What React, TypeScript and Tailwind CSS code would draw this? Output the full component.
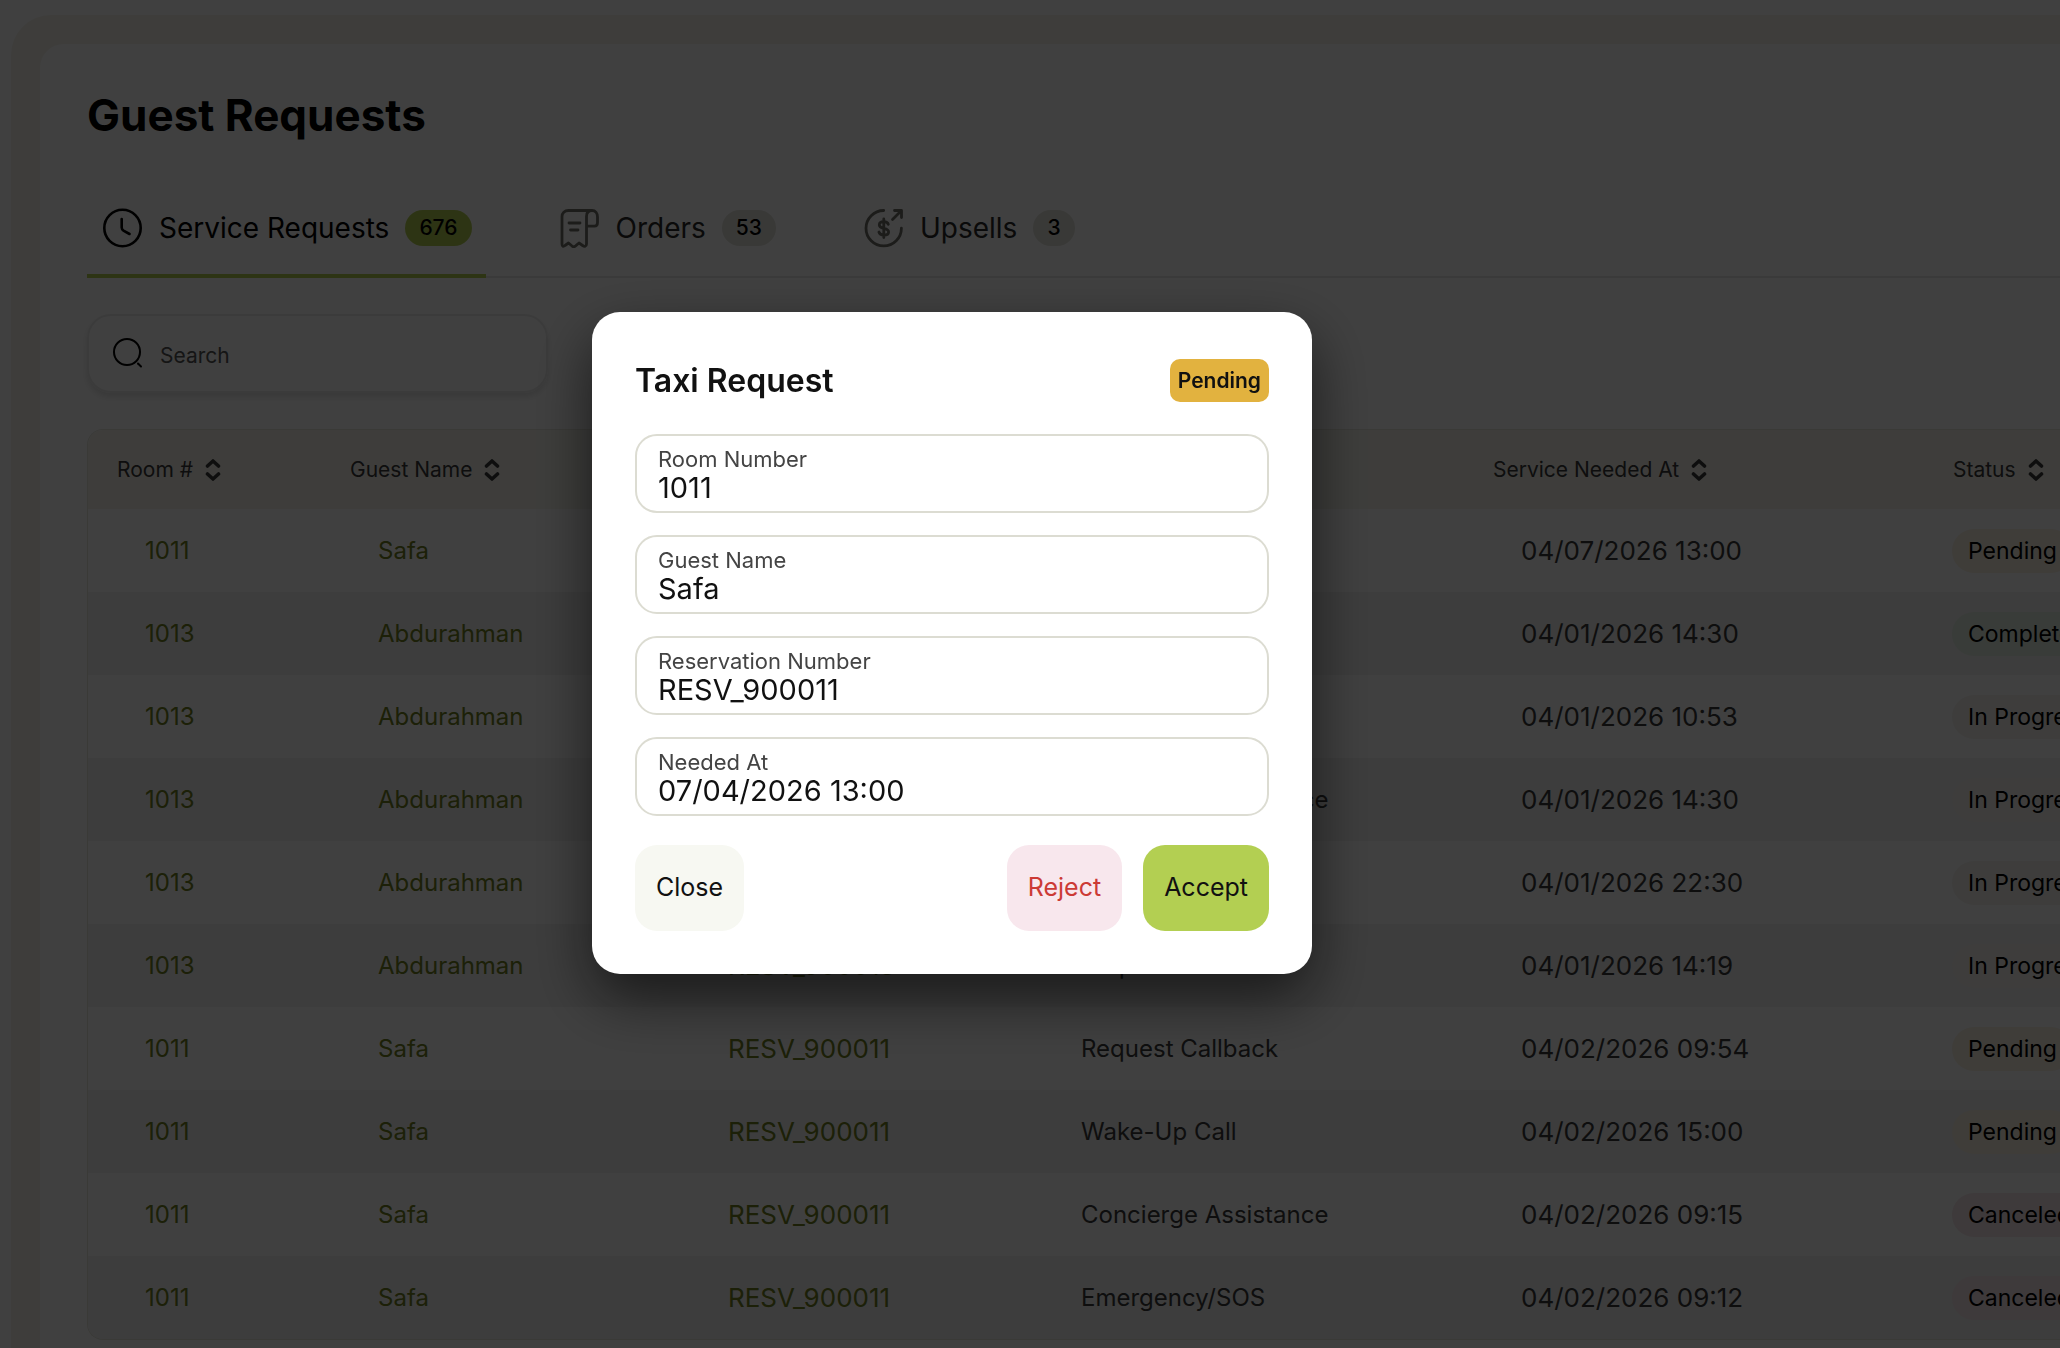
import type { ReactNode } from "react";

type Status = "Pending" | "Completed" | "In Progress" | "Canceled";

interface ServiceRequest {
  room: string;
  guest: string;
  reservation: string;
  service: string;
  neededAt: string;
  status: Status;
}

const requests: ServiceRequest[] = [
  { room: "1011", guest: "Safa", reservation: "RESV_900011", service: "Taxi Request", neededAt: "04/07/2026 13:00", status: "Pending" },
  { room: "1013", guest: "Abdurahman", reservation: "RESV_900013", service: "Wake-Up Call", neededAt: "04/01/2026 14:30", status: "Completed" },
  { room: "1013", guest: "Abdurahman", reservation: "RESV_900013", service: "Taxi Request", neededAt: "04/01/2026 10:53", status: "In Progress" },
  { room: "1013", guest: "Abdurahman", reservation: "RESV_900013", service: "Concierge Assistance", neededAt: "04/01/2026 14:30", status: "In Progress" },
  { room: "1013", guest: "Abdurahman", reservation: "RESV_900013", service: "Wake-Up Call", neededAt: "04/01/2026 22:30", status: "In Progress" },
  { room: "1013", guest: "Abdurahman", reservation: "RESV_900013", service: "Request Callback", neededAt: "04/01/2026 14:19", status: "In Progress" },
  { room: "1011", guest: "Safa", reservation: "RESV_900011", service: "Request Callback", neededAt: "04/02/2026 09:54", status: "Pending" },
  { room: "1011", guest: "Safa", reservation: "RESV_900011", service: "Wake-Up Call", neededAt: "04/02/2026 15:00", status: "Pending" },
  { room: "1011", guest: "Safa", reservation: "RESV_900011", service: "Concierge Assistance", neededAt: "04/02/2026 09:15", status: "Canceled" },
  { room: "1011", guest: "Safa", reservation: "RESV_900011", service: "Emergency/SOS", neededAt: "04/02/2026 09:12", status: "Canceled" },
];

const columns = [
  { label: "Room #", width: "w-[233px]" },
  { label: "Guest Name", width: "w-[350px]" },
  { label: "Reservation #", width: "w-[353px]" },
  { label: "Service", width: "w-[440px]" },
  { label: "Service Needed At", width: "w-[460px]" },
  { label: "Status", width: "w-[320px]" },
];

const statusStyles: Record<Status, string> = {
  Pending: "bg-[#f9f2e4]",
  Completed: "bg-[#e2efe2]",
  "In Progress": "bg-[#f5f4f0]",
  Canceled: "bg-[#f6e6ea]",
};

function ClockIcon() {
  return (
    <svg className="size-10" viewBox="0 0 40 40" fill="none" stroke="currentColor" strokeWidth="2.6" strokeLinecap="round" aria-hidden>
      <circle cx="19.5" cy="20" r="18.2" />
      <path d="M18.7 11v8.5c0 1.4.6 2.4 1.8 3.200L26.500 26" />
    </svg>
  );
}

function ReceiptIcon() {
  return (
    <svg className="size-10" viewBox="0 0 40 40" fill="none" stroke="currentColor" strokeWidth="2.8" strokeLinecap="round" strokeLinejoin="round" aria-hidden>
      <path d="M32 2.5H8.5c-4 0-6.5 2.500-6.500 6V36c0 2.300 1.300 2.900 3 1.500l3.500-2.500 3.300 2.800 1.900 1.400 1.900-1.400L19 35l3.600 2.500c1.900 1.400 3.900 1 3.900-1.500V8.500c0-4 2-6 5.500-6s5.500 3 5.500 6.500v5.500c0 2.500-1 3.700-3 3.700h-7.500" />
      <path d="M9 15h11M10.500 22h7.500" />
    </svg>
  );
}

function UpsellIcon() {
  return (
    <svg className="size-10" viewBox="0 0 40 40" fill="none" stroke="currentColor" strokeWidth="2.8" strokeLinecap="round" strokeLinejoin="round" aria-hidden>
      <path d="M19.700 2.500a17.700 17.700 0 1 0 17.700 17.700" />
      <path d="M28.500 11.500 37.500 2.500m-7 0h7v7" />
      <path d="M24.300 16.300c-.5-1.800-2.200-2.600-4.500-2.600-2.800 0-4.500 1.200-4.500 3.200 0 4.600 9.300 2.200 9.300 7 0 2-2 3.100-4.700 3.100s-4.400-1-5-3M19.800 11v18.500" />
    </svg>
  );
}

function SearchIcon() {
  return (
    <svg className="size-8" viewBox="0 0 32 32" fill="none" stroke="currentColor" strokeWidth="2" strokeLinecap="round" aria-hidden>
      <circle cx="15" cy="14" r="13" />
      <path d="m26 25.500 3 3" />
    </svg>
  );
}

function SortIcon() {
  return (
    <svg className="h-6 w-4" viewBox="0 0 16 24" fill="none" stroke="currentColor" strokeWidth="3.6" strokeLinecap="round" strokeLinejoin="round" aria-hidden>
      <path d="m2.500 8 5.500-5L13.500 8M2.500 16l5.500 5 5.500-5" />
    </svg>
  );
}

interface TabProps {
  icon: ReactNode;
  label: string;
  count: number;
  active?: boolean;
}

function Tab({ icon, label, count, active = false }: TabProps) {
  return (
    <button
      type="button"
      role="tab"
      aria-selected={active}
      className={`flex h-24 items-center gap-4 border-b-4 pr-3.5 pl-4 text-[28px] ${
        active ? "border-[#b3cf52] text-black" : "border-transparent text-[#2b2b28]"
      }`}
    >
      <span className={active ? "text-black" : "text-[#70706a]"}>{icon}</span>
      {label}
      <span
        className={`rounded-full px-3.5 text-[21px] leading-9 font-medium text-black ${
          active ? "bg-[#b3cf52]" : "bg-[#e2e2da]"
        }`}
      >
        {count}
      </span>
    </button>
  );
}

function RequestsTable() {
  return (
    <div className="mt-9 overflow-hidden rounded-l-2xl border border-r-0 border-[#e6e6dc]">
      <table className="w-full min-w-[2156px] table-fixed text-left">
        <thead>
          <tr className="h-[79px] bg-[#f5f4ec]">
            {columns.map((col) => (
              <th key={col.label} scope="col" className={`${col.width} pl-[29px] font-normal`}>
                <button type="button" className="flex items-center gap-3 text-[21px] text-[#3a3a3a]">
                  {col.label}
                  <SortIcon />
                </button>
              </th>
            ))}
          </tr>
        </thead>
        <tbody className="text-[24px] text-[#3a3a3a]">
          {requests.map((req, i) => (
            <tr key={i} className="h-[83px] even:bg-[#f2f2f2]">
              <td className="pl-[57px]">
                <a href="#room" className="text-[#6f7f22]">{req.room}</a>
              </td>
              <td className="pl-[57px]">
                <a href="#guest" className="text-[#6f7f22]">{req.guest}</a>
              </td>
              <td className="pl-[57px] text-[26px]">
                <a href="#reservation" className="text-[#6f7f22]">{req.reservation}</a>
              </td>
              <td className="pl-[57px]">{req.service}</td>
              <td className="pl-[57px] text-[26px]">{req.neededAt}</td>
              <td className="pl-7">
                <span className={`inline-block rounded-full px-4 text-[23px] leading-[44px] text-black ${statusStyles[req.status]}`}>
                  {req.status}
                </span>
              </td>
            </tr>
          ))}
        </tbody>
      </table>
    </div>
  );
}

function Field({ id, label, value }: { id: string; label: string; value: string }) {
  return (
    <div className="flex h-[79px] flex-col rounded-[22px] border-2 border-[#dcdcd2] px-[21px] pt-[10px]">
      <label htmlFor={id} className="text-[22px] leading-[26px] text-[#444]">
        {label}
      </label>
      <input id={id} readOnly value={value} className="w-full text-[29px] leading-8 text-[#111] outline-none" />
    </div>
  );
}

function RequestDialog() {
  return (
    <div
      role="dialog"
      aria-modal="true"
      aria-labelledby="dialog-title"
      className="w-[720px] rounded-[28px] bg-white p-[43px] shadow-[0_24px_60px_rgba(0,0,0,0.6)]"
    >
      <div className="flex items-center justify-between">
        <h2 id="dialog-title" className="text-[32px] leading-[51px] font-semibold text-[#111]">
          Taxi Request
        </h2>
        <span className="rounded-[10px] bg-[#e2b23f] px-2 text-[21px] leading-[43px] font-semibold text-[#111]">Pending</span>
      </div>
      <div className="mt-7 flex flex-col gap-[22px]">
        <Field id="room-number" label="Room Number" value="1011" />
        <Field id="guest-name" label="Guest Name" value="Safa" />
        <Field id="reservation-number" label="Reservation Number" value="RESV_900011" />
        <Field id="needed-at" label="Needed At" value="07/04/2026 13:00" />
      </div>
      <div className="mt-[29px] flex h-[86px] gap-[21px] text-[25px] text-[#111]">
        <button type="button" className="mr-auto rounded-[22px] bg-[#f7f8f2] px-[21px]">
          Close
        </button>
        <button type="button" className="rounded-[22px] bg-[#f8e7ed] px-[21px] text-[#cc3a35]">
          Reject
        </button>
        <button type="button" className="rounded-[22px] bg-[#b3cf52] px-[21px]">
          Accept
        </button>
      </div>
    </div>
  );
}

export default function App() {
  return (
    <div className="h-screen overflow-hidden bg-white font-[Inter,'Liberation_Sans',sans-serif]">
      <main className="pt-[15px] pl-[11px]">
        <div className="rounded-tl-[40px] bg-[#f5f4ec] pt-[29px] pl-[29px]">
          <div className="min-h-screen rounded-tl-3xl bg-white pt-10 pl-[47px]">
            <h1 className="text-[44px] leading-[62px] font-bold text-black">Guest Requests</h1>
            <div className="mt-9 border-b-2 border-[#e6e6e6]">
              <div role="tablist" className="-mb-[2px] flex gap-[58px]">
                <Tab icon={<ClockIcon />} label="Service Requests" count={676} active />
                <Tab icon={<ReceiptIcon />} label="Orders" count={53} />
                <Tab icon={<UpsellIcon />} label="Upsells" count={3} />
              </div>
            </div>
            <label className="mt-9 flex h-[79px] w-[461px] items-center gap-4 rounded-3xl border-2 border-[#ebebeb] px-[23px] shadow-[0_4px_6px_rgba(0,0,0,0.12)]">
              <SearchIcon />
              <input
                type="search"
                placeholder="Search"
                aria-label="Search"
                className="min-w-0 flex-1 pt-1 text-[21px] outline-none placeholder:text-[#555]"
              />
            </label>
            <RequestsTable />
          </div>
        </div>
      </main>

      <div className="fixed inset-0 flex items-center justify-center bg-black/75 pr-[156px] pb-[62px]">
        <RequestDialog />
      </div>
    </div>
  );
}
